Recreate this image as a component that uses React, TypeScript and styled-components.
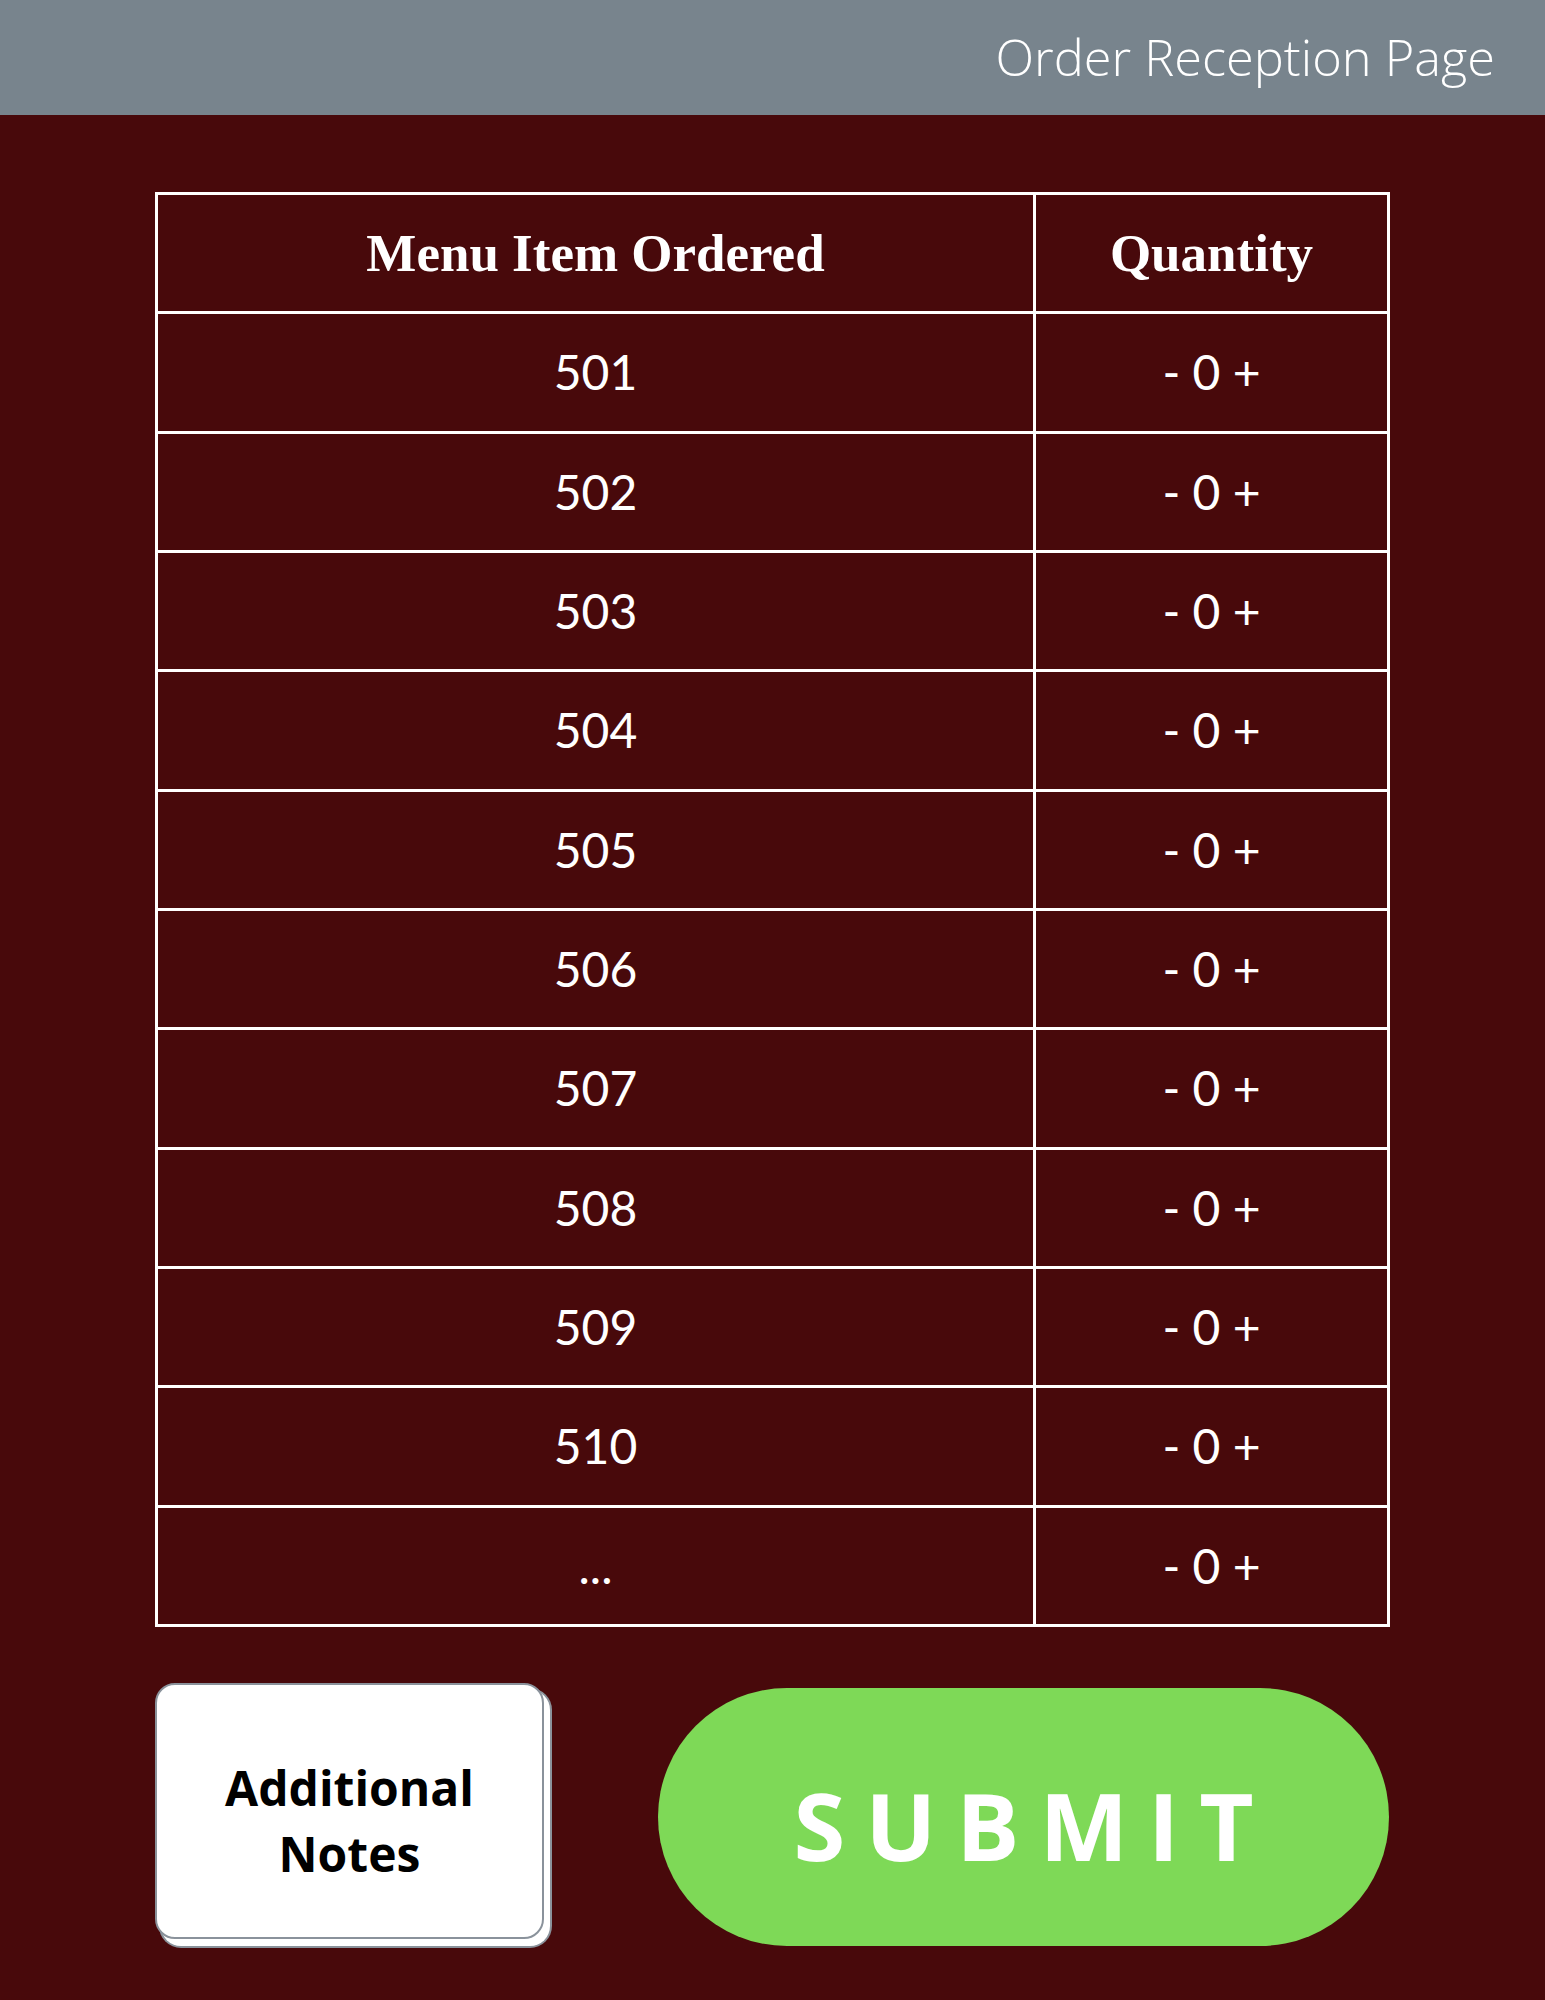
import React from "react";
import styled, { createGlobalStyle } from "styled-components";

const GlobalStyle = createGlobalStyle`
  html, body {
    margin: 0;
    padding: 0;
  }
  body {
    background: #48090b;
    font-family: "Lato", "Liberation Sans", sans-serif;
  }
`;

const Page = styled.div`
  width: 1545px;
  min-height: 2000px;
  background: #48090b;
  display: flex;
  flex-direction: column;
`;

const TopBar = styled.header`
  height: 115px;
  box-sizing: border-box;
  background: #78848d;
  display: flex;
  align-items: center;
  justify-content: flex-end;
  padding-right: 50px;
`;

const Title = styled.h1`
  margin: 0;
  font-family: "Open Sans", "Liberation Sans", sans-serif;
  font-weight: 300;
  font-size: 50.5px;
  line-height: 1;
  color: #ffffff;
`;

const Main = styled.main`
  display: flex;
  flex-direction: column;
  padding: 77px 155px 0;
`;

const OrderTable = styled.div`
  display: grid;
  grid-template-columns: 875px 351px;
  grid-template-rows: repeat(12, 1fr);
  gap: 3px;
  padding: 3px;
  width: 1235px;
  height: 1435px;
  box-sizing: border-box;
  background: #ffffff;
`;

const HeadCell = styled.div`
  background: #48090b;
  color: #ffffff;
  display: flex;
  align-items: center;
  justify-content: center;
  font-family: "Liberation Serif", "DejaVu Serif", serif;
  font-weight: 700;
  font-size: 53px;
  line-height: 1;
`;

const Cell = styled.div`
  background: #48090b;
  color: #ffffff;
  display: flex;
  align-items: center;
  justify-content: center;
  font-family: "Lato", "Liberation Sans", sans-serif;
  font-weight: 400;
  font-size: 48px;
  line-height: 1;
`;

const Actions = styled.div`
  display: flex;
  align-items: flex-start;
  gap: 114px;
  margin-top: 56px;
`;

const NotesCard = styled.button`
  width: 389px;
  height: 256px;
  box-sizing: border-box;
  background: #ffffff;
  border: 2px solid #8a929b;
  border-radius: 20px;
  box-shadow: 6px 7px 0 0 #ffffff, 6px 7px 0 2px #8a929b;
  padding: 20px 0 0;
  font-family: "Open Sans", "Liberation Sans", sans-serif;
  font-weight: 700;
  font-size: 48px;
  line-height: 66px;
  color: #000000;
  display: flex;
  flex-direction: column;
  align-items: center;
  justify-content: center;
  cursor: pointer;
`;

const SubmitButton = styled.button`
  margin-top: 5px;
  width: 731px;
  height: 258px;
  box-sizing: border-box;
  border: none;
  border-radius: 999px;
  background: #7ed957;
  color: #ffffff;
  font-family: "Open Sans", "Liberation Sans", sans-serif;
  font-weight: 700;
  font-size: 94px;
  line-height: 1;
  letter-spacing: 20px;
  padding: 16px 0 0 20px;
  cursor: pointer;
`;

const items = ["501", "502", "503", "504", "505", "506", "507", "508", "509", "510", "..."];

export default function App() {
  return (
    <Page>
      <GlobalStyle />
      <TopBar>
        <Title>Order Reception Page</Title>
      </TopBar>
      <Main>
        <OrderTable>
          <HeadCell>Menu Item Ordered</HeadCell>
          <HeadCell>Quantity</HeadCell>
          {items.map((it) => (
            <React.Fragment key={it}>
              <Cell>{it}</Cell>
              <Cell>- 0 +</Cell>
            </React.Fragment>
          ))}
        </OrderTable>
        <Actions>
          <NotesCard>
            <span>Additional</span>
            <span>Notes</span>
          </NotesCard>
          <SubmitButton>SUBMIT</SubmitButton>
        </Actions>
      </Main>
    </Page>
  );
}
